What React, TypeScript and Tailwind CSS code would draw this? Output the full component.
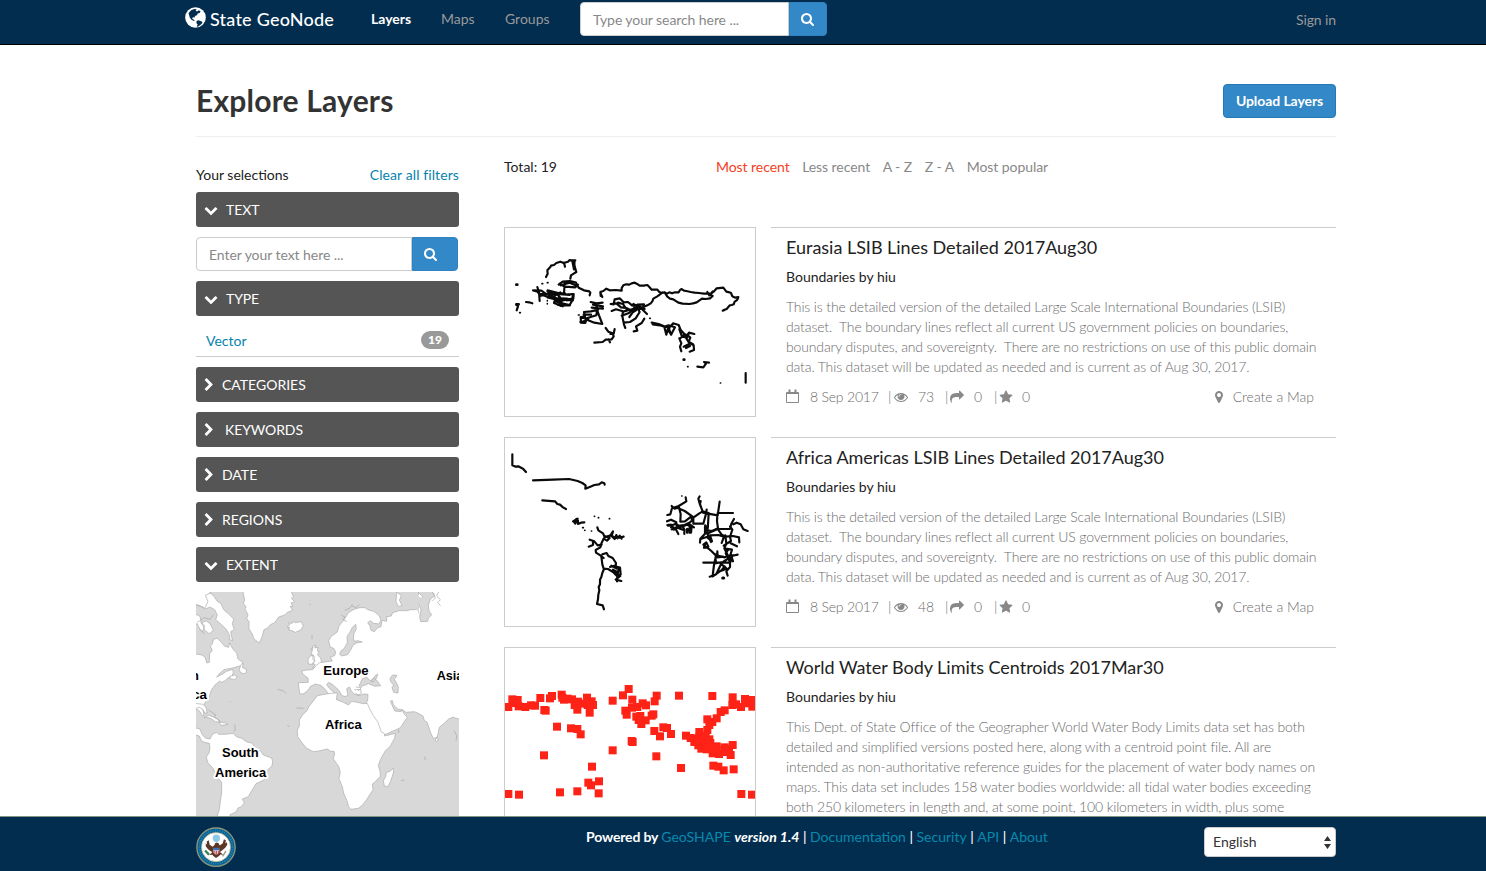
import React from "react";

const ICONS = {
  search:
    "M1152 832q0-185-131.5-316.5t-316.5-131.5-316.5 131.5-131.5 316.5 131.5 316.5 316.5 131.5 316.5-131.5 131.5-316.5zm512 832q0 52-38 90t-90 38q-54 0-90-38l-343-342q-179 124-399 124-143 0-273.5-55.5t-225-150-150-225-55.5-273.5 55.5-273.5 150-225 225-150 273.5-55.5 273.5 55.5 225 150 150 225 55.5 273.5q0 220-124 399l343 343q37 37 37 90z",
  down: "M1683 808l-742 741q-19 19-45 19t-45-19l-742-741q-19-19-19-45.5t19-45.5l166-165q19-19 45-19t45 19l531 531 531-531q19-19 45-19t45 19l166 165q19 19 19 45.5t-19 45.5z",
  right:
    "M1363 877l-742 742q-19 19-45 19t-45-19l-166-166q-19-19-19-45t19-45l531-531-531-531q-19-19-19-45t19-45l166-166q19-19 45-19t45 19l742 742q19 19 19 45t-19 45z",
  star: "M1728 647q0 22-26 48l-363 354 86 500q1 7 1 20 0 21-10.5 35.5t-30.5 14.5q-19 0-40-12l-449-236-449 236q-22 12-40 12-21 0-31.5-14.5t-10.5-35.5q0-6 2-20l86-500-364-354q-25-27-25-48 0-37 56-46l502-73 225-455q19-41 49-41t49 41l225 455 502 73q56 9 56 46z",
  eye: "M1664 960q-152-236-381-353 61 104 61 225 0 185-131.5 316.5t-316.5 131.5-316.5-131.5-131.5-316.5q0-121 61-225-229 117-381 353 133 205 333.5 326.5t434.5 121.5 434.5-121.5 333.5-326.5zm-720-384q0-20-14-34t-34-14q-125 0-214.5 89.5t-89.5 214.5q0 20 14 34t34 14 34-14 14-34q0-86 61-147t147-61q20 0 34-14t14-34zm848 384q0 34-20 69-140 230-376.5 368.5t-499.5 138.5-499.5-139-376.5-368q-20-35-20-69t20-69q140-229 376.5-368t499.5-139 499.5 139 376.5 368q20 35 20 69z",
  share:
    "M1792 640q0 26-19 45l-512 512q-19 19-45 19t-45-19-19-45v-256h-224q-98 0-175.5 6t-154 21.5-133 42.5-105.5 69.5-80 101-48.5 138.5-17.5 181q0 55 5 123 0 6 2.5 23.5t2.5 26.5q0 15-8.5 25t-23.5 10q-16 0-28-17-7-9-13-22t-13.5-30-10.5-24q-127-285-127-451 0-199 53-333 162-403 875-403h224v-256q0-26 19-45t45-19 45 19l512 512q19 19 19 45z",
  marker:
    "M1152 640q0-106-75-181t-181-75-181 75-75 181 75 181 181 75 181-75 75-181zm256 0q0 109-33 179l-364 774q-16 33-47.5 52t-67.5 19-67.5-19-46.5-52l-365-774q-33-70-33-179 0-212 150-362t362-150 362 150 150 362z",
};

function Icon({ name, className }: { name: keyof typeof ICONS; className: string }) {
  return (
    <svg viewBox="0 0 1792 1792" fill="currentColor" className={`shrink-0 ${className}`}>
      <path d={ICONS[name]} />
    </svg>
  );
}

function Globe() {
  return (
    <svg viewBox="27 20 63 64" className="h-[21px] w-[21px] shrink-0">
      <circle cx="58.5" cy="52" r="31.5" fill="#fff" />
      <path
        fill="#022d4f"
        d="M40 35l6-6 10-3 6 1-3 4 4 3 6-4 5 4-3 4-6 2-2 5-5 2-3 5-4-1-3 3 3 3 5 3-2 3-8-4-5-7-2-8-2-4zM62 63l5-3 7 3 6 3-3 6-6 4-5 4-4 0 3-6-4-6z"
      />
    </svg>
  );
}

function CalendarIcon() {
  return (
    <svg viewBox="0 0 13 14" className="h-[14px] w-[13px] shrink-0" fill="none" stroke="currentColor">
      <path d="M.5 3.500h12v10h-12zM.5 4.500h12" />
      <path d="M3.500 .5v3M9.500 .5v3" strokeWidth="2" />
    </svg>
  );
}

function Panel({ title, open, pad }: { title: string; open?: boolean; pad?: boolean }) {
  return (
    <div className="flex h-[35px] items-center rounded-[3px] bg-[#555] pl-2 text-[14px] text-white">
      <Icon name={open ? "down" : "right"} className={open ? "mr-2 h-[14px] w-[14px]" : "-ml-0.5 mr-1 h-[14px] w-[14px]"} />
      <span className={pad ? "pl-[5px] tracking-[-0.1px]" : open ? "tracking-[-0.1px]" : "pl-0.5"}>{title}</span>
    </div>
  );
}

function Eurasia() {
  return (
    <svg viewBox="15 18 750 564" className="block h-[188px] w-[250px]" fill="none" stroke="#0a0a0a" strokeWidth="6.500" strokeLinejoin="round" strokeLinecap="round">
      <path d="M138 165l5-10-1-10 9-10 2-4 9-2 7-6 12-4 10 4 13-4 5-5 9 2 6 1-1 10 2 10 4 13-8 5-8 5-2 10M192 122l3 12M217 118l5 24M210 115h16M176 188l12-9 22-2 18 5 8 15 16 8 16 3 3 4-2 8M178 186l18 8 30 2 8-8M182 190l27-8 21 9M99 205l12 3 7 8 20 7 24 3 20 7 18-3 19 5M112 195l5 15 2 27M104 205l20 1 14 10 25-6 30 8 28-2-1 14-20 5M120 222l23-6 22 17-3 10 26 10M143 205l23 6 15 16 2 25M117 216l53 0 39 3M142 226l42 10 33-6 2-14M165 239l25-10 26 8-7 12-23-5M175 218l7 24-8 7M194 180l-2 36M142 207l18 17 21-13M150 214h45M160 230h40M180 250h30M78 240l9 1 10 3M49 248l5 5-4 12" />
      <path d="M302 222l-1-12 9-3 9-7 10 5 18-1 18 2 0-8 5-8 9-3 9 1 7-4 9-2 6 3 9 6 12 0 11-2 6 6 7 8 17 0 6 7 8 3 8-2 7 4 7-4 8 3 9-3 11 0 4-7 4-3 8 5 7 1 13 3 12 2 13 1 15 2 22-1 7-5 9-10 20-2 9 12 9 2 5 2 4 10 9 4 9-2-2 6-3 4-6 4-3 8-6 2-6 1-9 11-9 3M488 211l-9 7-7 5-12 7-3 8-5 6-10 6-12 5-15 2-7 8-10 6-10 14M494 211l8 13 8 6 10 2 15 10 13 3 20 1 11-2 11-3 16-11 11 1 13-2 8-7-11-6M622 210l6 10 10-12M307 225l-6-13M668 266l8-3" />
      <path d="M332 246l9 1 3-15 15-3 12 12 13-1 12 10 22 4M333 246l16-2 14 12 16 2 18 9 17-9M354 242l15 4 9 14 18 7M335 267l13-5 21 6-2 14 5 26 4 10M372 268l27-7 13-13 20-1-4 16 13 13M371 302l19-2 17-11 12-19-8-15M365 281l22-8 17-13 30 1M400 246l20 12-25 4M401 328l11-2-4-13 17-10 8-13M397 251l22 1M402 259l19-3" />
      <path d="M272 240l18 4 18-2M279 248l30 5M286 247l8 16-21 5-21 2 3 14-13 1 1 17 13 1 4-14 29-9 2-13M275 257l34 3M292 266l5 14 10 26-24-4-26-10M251 278h22M246 287l19 3-16 9M317 318l8 11 13 5 3 9-6 9-18 1-9 7-25 2M344 321l-3 14-10 1M326 352l4 9" />
      <path d="M455 302l21 4 22 9 16-4 5-7 17 5 6 15 11 12 8 4 6-8 16 4M458 307l22 3 15 5 6-4M493 315l6 23 6-24 8 24 12-22-20-6M511 311l-6 15 9 12M538 322l6 17 14 6 10-12M538 350l13-8 9 7 4-8 7 6-5 12 14 8M538 349l6 15-4 10 4 14M558 348l11 17-18 9M569 363l12 7 1 14-13 5M548 344l13 3M558 378l12-6M592 434l18 2 8-11-6-5 15 2" />
      <path d="M737 453v29" />
      <path strokeWidth="8" d="M49 188h3M49 247h7M551 413h2M242 300h6M172 239h12M181 250h9M405 250l11 4" />
      <path strokeWidth="5" d="M126 185h2M142 182h2M142 236v1M142 245v1M59 272h2M235 279h3M449 289h2M563 434h1M661 483h1" />
    </svg>
  );
}

function AfricaAmericas() {
  return (
    <svg viewBox="15 18 750 564" className="block h-[188px] w-[250px]" fill="none" stroke="#0a0a0a" strokeWidth="6.500" strokeLinejoin="round" strokeLinecap="round">
      <path d="M37 67v33l10 4 8-1 14 7 9 10M99 145l60-2 48-2 26 6 14 6 10 7-1 10 15-6 12-5 14-2 8-6 8 3 1 4M127 205l38 3 7 8 8 2 9 8 9 5" />
      <path d="M219 268l14-8-7 15-5-7 8-7M234 266v10l9-4 10-1M292 286l3 9 14 9 5 11 17-4 8-13-4 13 10 7 14-1 12-3M315 313l14 5-8 8-10-6-6 12-4 14-14 8 1 8 13 8 10 8M331 309l13 12 5-12 4 10 6-8 6 9M269 323l14 5 10 12 12-2M279 330v9l-13 5M307 367l13-4 5 9 13 6 10 15-1 11 13 3 2 20-10 5-1 16M304 373l3 24 4 13 13 1 15 9 12 12M330 405l13-4 13 8-2 12-15-8 22 19-14 11 17 4M312 411l-5 12-3 12-4 8 0 14-4 8 2 10-3 13-1 14-3 14 17 4 4 12" />
      <path d="M334 401l16 9" />
      <path d="M502 249l9-2 5-18 20-7 23-14-2-12M515 222l9 8 13-4 5 20-1 23 14-1 19-15 2 13-17 13-20 2-18 9-8-12M533 228l21 9 27 19 17-12 10-6-8-20-5-18 4-7M602 207l-2 9 9 26 44 8 6-41M580 255v20l30 0 8-30 2-12M608 238l18 5-2 36-4 15M653 243h46M652 248l-1 20 3 21-18 8-15-2-5-15" />
      <path d="M501 268l12-5 16 8M502 279l16 0 10-4 10 8-10 5-15-2M515 292l11-3 9 17M522 293l10-6 21 8 0 11M540 286l21-8 14 8-2 16-8-10M529 279l10 8 8-6 7 13M569 285v17M549 281l16-7 17 12M615 283v22l-14 15-1 12M624 281l-3 24 32-14 37 0 4-16 8-14M653 291l12 17 12 6 22-2 18 4 1 15M690 283l7 10-7 22 3 12-22 14M700 277l10-5 12 5 8 15 13 5M604 320l16-5 16 13-6-18 25-1 17 5-7 19M621 303l12 27M610 338l9-7 6 13-13 3 10 0 12 10 12 12 28 7 12-5 25-2M676 310l3 25-6 14 9 18M676 350l20 3-4 13 7 22M692 334l19 9M610 392l80 0 0 13-11 13 4 13M650 365l-8 34-4 32-9 3M665 392l-16 34-11 7 26-18 10-12M648 369l-4 25 25-4 24-16-1 15M685 352l-8 12 12 24M652 358l1 18 16-2M662 395l18 15-16 6M695 372l18-4" />
      <path strokeWidth="9" d="M668 438h3M694 373v9M505 280h6M614 339v5M646 385v4M562 292v9" />
      <path strokeWidth="5" d="M283 253h1M295 257h1M328 260h1M248 287h2M254 295h1M274 297h1M545 192h1" />
    </svg>
  );
}

const CENTROIDS = [
  [25, 195], [37, 172], [53, 174], [45, 183], [56, 193], [76, 195], [93, 190], [105, 191], [121, 168], [137, 206], [133, 204], [150, 169], [156, 162], [185, 158],
  [187, 167], [192, 173], [203, 170], [216, 172], [224, 189], [234, 179], [232, 203], [249, 185], [261, 167], [263, 189], [275, 178], [279, 189], [269, 212],
  [338, 176], [386, 141], [369, 160], [397, 173], [470, 161], [464, 178], [537, 161], [637, 162], [428, 184], [438, 190], [412, 195], [396, 197], [376, 206], [380, 218],
  [409, 224], [421, 222], [416, 234], [437, 235], [424, 246], [455, 221], [460, 217], [171, 254], [213, 259], [232, 261], [242, 277], [463, 267], [480, 283],
  [490, 256], [501, 258], [513, 276], [395, 297], [398, 300], [338, 325], [469, 343], [132, 340], [276, 374], [265, 422], [273, 430], [297, 418], [296, 454],
  [25, 456], [57, 458], [180, 451], [232, 448], [543, 378], [558, 281], [572, 288], [585, 291], [598, 270], [622, 264], [628, 249], [622, 232], [637, 240],
  [650, 229], [662, 210], [674, 205], [697, 189], [698, 166], [708, 187], [723, 195], [735, 171], [744, 184], [755, 174], [757, 194], [583, 300], [598, 285],
  [608, 290], [617, 281], [628, 292], [595, 310], [605, 305], [617, 306], [631, 303], [604, 320], [620, 322], [635, 316], [650, 313], [638, 334], [650, 323],
  [657, 336], [674, 316], [677, 330], [687, 321], [698, 309], [692, 339], [640, 371], [655, 374], [671, 385], [701, 382], [724, 456], [756, 458],
];

function WaterBodies() {
  return (
    <svg viewBox="15 18 750 564" className="block h-[188px] w-[250px]">
      {CENTROIDS.map(([x, y], i) => (
        <rect key={i} x={x - 12} y={y - 12} width="24" height="24" fill="#ff2216" />
      ))}
    </svg>
  );
}

function ExtentMap() {
  return (
    <svg viewBox="18 21 789 672" className="block h-[224px] w-[263px] shrink-0">
      <rect x="18" y="21" width="789" height="672" fill="#d8d8d8" />
      <g fill="#fff" stroke="#aaa" strokeWidth="2" strokeLinejoin="round">
        <path d="M159 10v11l5 24-4 10 8 10-3 8 9 16-4 11 7 10 0 22 10 15 5 15 16 12 9-21 5-19 11-5 8-10 13-6 12-17 18-6 8-8 16-6-8-12 9 0-6-10 11-4-10-10 6-6-6-13V10z" />
        <path d="M14 60l20 4 12 8 14-6 14 8 8 16-5 14 13 11 20 19 9 18 0 12 9 3-4-15-2-12 11-6-6-18 4-14-16-16-14-12-8-18-12-8-9-14-12-11V10H10z" />
        <path d="M14 86l16 8 4 22 10 6-6 18-8-6-8-18-8 2zM36 112l14-4 10 8 10 20-12 10-14-10z" />
        <path d="M14 206l22 4 10 8 4 16 8-2 1-26 8-10-6-12 7-9 2-12 12-3 10 10 12 14 12 3 3-14 8 16 13 16 4 17 14 10 0 8-26 8-30 6-12 10-10 12 16-8 14-9 18-6 2 10-6 13-11 3-7 8-12 5-5-4-14 12-11 15-6 21-13 17-7 18 4 20-4 2-9-14-7-6H14z" />
        <path d="M148 254l4-14 7-6-1 14 10 4 2 10-8 4-10-3zM119 274l14-4 10 6-10 8-12-3z" />
        <path d="M296 114l11 1 3-7 5 5 19-3 6 13-8 12-16 7-13-6-9-3 6-5-9-2 8-6zM354 222l8-10 10 1 2 14-5 11-14-1zM369 183l8-3-3 9 10-3-2 12 6 2-6 9 10 10 4 19-8 6-20 3 8-8-9-4 7-6-6-7 2-12-6-1z" />
        <path d="M427 228l-6-12 13-4 3-11-5-10-12-6-4-18 8-13 18-13 5-18 16-20 12-20 17-10 17-5 16 0 8 6 18 5 16 12 6 14-6 12-16-2-10-8-8 6 7 10 3 13 10 4 10-12 10-3 3-19 14 3 0-14 14-2 4-10 20-6 22 0 12-3 17 0 7-6-7-25 8-19V10h130v395l-28-8-12 4-17 16-12 10-6 29-12 5-9-20-10-30-8-4-4-14-16-9-10-4-25 2-10-7-14-2-14-14-3-12-6 1 13 30 19 2 2-8 8 16 9 9-10 14-11 17-17 8-38 17-9-5-9-25-15-20-10-22-14-8 6-11 8-17 1-17-12-1-12 4-17-3-9-10-6-12-8 5 4 20-9 4-10-4-9-16-9-8-11-10-11-5-5 8 11 13 12 10-4 9-14-6-12-16-11-9-16-4-14 7-10 14-13 9-10-1-4-33 30-1-1-13-16-12-3-9 15-3 18-1 9-11 12-10z" />
        <path fill="#d8d8d8" d="M497 118l-10 9-7 14-9 14 1 18-9 17-10 8-4 9 5 6 19-4 9-14 7-15 12-7 16-2-14-4-10 2-3-10 2-14 7-14zM507 303l10-22 13-4 11 10 12-8 9 9 10 14-17 2-20-8-20 8zM600 280l8-10 13 1-8 12 7 12 5 12-1 17-13-2-5-14 5-8-9-10zM543 289l12-16 8-6-3 12-11 12zM684 10v11l14 14-13 19 8 20-4 24 3 12 21-1 2-10 10-9-8-12-2-18 7-19 12-8-8-13V10z" />
        <path stroke="none" fill="#d8d8d8" d="M634 21h50v12l14 8-13 15 4 38-8-20-40-14-8 4 8-10-8-19 6-6z" />
        <path d="M620 21l14 11-6 14 8 15-10 4-8-14z" />
        <path d="M382 332l38-7 22-1-3 20 17 6 20 10 8-11 18 3 18 4 12-1 6 15 12 22 13 18 11 31 9 4 1 8 32-8-2 14-13 24-16 16-14 25-6 18 5 16 1 16-14 15-10 8 2 18-10 14-9 15-13 17-12 9-22 3-7-8-5-18-10-22-4-20-10-24 4-19-5-18-6-8-10-15 4-14-2-8-10 0-10-7-26 6-16 2-20-10-15-18-12-17-1-20 6-12 0-18 10-16 13-12 5-11zM609 549l2 12-10 30-8 14-10-2-3-16 7-12 2-13 12-3z" />
        <path d="M14 355l26 3 8 10 4 16-7 0-7-11-10-6-14 5zM14 428l16 4 6 16 10 11 14 3 7-14 13-6 6 6 20 0 24-3 9 10 16 5 14 10 18 5 9 15 16 8 8 12 25 9 3 10-2 14-14 12-4 22-8 9-22 10-9 15-8 13-6 11-18 7 6 12-10 12-9 3-6 12-18 8 1 9H80l8-24 3-24 4-26 0-32-14-16-12-26-16-18-4-16 8-12 3-15-2-14-14-3-10-5-6-14-14-4z" />
        <path d="M42 398l13-7 14 4 13 7 10 9-16-1-11-8-12-5zM86 411l18 2 10 5-20 3zM736 466l5-10 4 9-6 4z" />
      </g>
      <g fill="none" stroke="#a6a6a6" strokeWidth="2">
        <path d="M18 57l26 13 10-20-8-19 18-8M22 112l20-14 18 5 10-14M28 130l15 17M454 91l11 5-6 8 12 6M464 76l15-6 9-13M486 63l12 5 10-9M493 314h20v12l-10 5-7-8M497 306l17 2-10 10M56 375l22 15-6 5 18 14M134 418l2 15-4 6M366 150v13M361 194l8-8M359 60l4-3M263 313l17 4 8 8M292 420l6 6M119 349l3 1M319 369l22 1M626 434v10M704 515l2 10M633 587l10-2M746 21l-6 12 11 11-8 9 9 10M730 23l6 16-9 9M792 437l8 14-2 16" />
      </g>
      <g fontFamily="Liberation Sans, Arial, sans-serif" fontWeight="700" fontSize="40" textAnchor="middle" fill="#000" stroke="#fff" strokeWidth="12" strokeLinejoin="round" paintOrder="stroke">
        <text x="468" y="270" textLength="136" lengthAdjust="spacingAndGlyphs">Europe</text>
        <text x="460" y="431" textLength="110" lengthAdjust="spacingAndGlyphs">Africa</text>
        <text x="151" y="517" textLength="110" lengthAdjust="spacingAndGlyphs">South</text>
        <text x="152" y="575" textLength="154" lengthAdjust="spacingAndGlyphs">America</text>
        <text x="740" y="286" textAnchor="start" textLength="80" lengthAdjust="spacingAndGlyphs">Asia</text>
        <text x="27" y="286" textAnchor="end">n</text>
        <text x="51" y="342" textAnchor="end">ca</text>
      </g>
    </svg>
  );
}

function Seal() {
  return (
    <svg viewBox="18 725 120 121" className="h-10 w-10 shrink-0">
      <circle cx="78" cy="786" r="58" fill="#07639a" stroke="#8a9878" strokeWidth="4" />
      <circle cx="78" cy="786" r="50" fill="none" stroke="#2f86a0" strokeWidth="5" strokeDasharray="3 4" />
      <circle cx="78" cy="786" r="44" fill="#fff" stroke="#b8ad78" strokeWidth="2" />
      <circle cx="79" cy="759" r="11" fill="#8bc8ea" />
      <path fill="#5c3726" d="M74 779l-6 6-9-6-3-14-6 4 1 9-4-4 0 9 7 9 8 6 5 3-9 9 9-1 3 4 8 6 9-6 4-5 9 1-10-8 6-5 10-8 6-9-1-8-5 3 2-9-6-3-4 13-9 6-3-7-6-2-5 2z" />
      <path fill="#d9d8e5" d="M70 790h18v12l-9 8-9-8z" />
      <path fill="#d64654" d="M71 797h3v9l-3-3zM77 797h4v12h-4zM84 797h3v6l-3 3z" />
      <path fill="#3774b5" d="M70 788h18v7H70z" />
      <path fill="none" stroke="#348454" strokeWidth="7" d="M45 796l12 13" />
      <path fill="none" stroke="#98937a" strokeWidth="4" d="M98 814l10-16" />
    </svg>
  );
}

const LSIB = [
  "This is the detailed version of the detailed Large Scale International Boundaries (LSIB)",
  "dataset.  The boundary lines reflect all current US government policies on boundaries,",
  "boundary disputes, and sovereignty.  There are no restrictions on use of this public domain",
  "data. This dataset will be updated as needed and is current as of Aug 30, 2017.",
];
const WATER = [
  "This Dept. of State Office of the Geographer World Water Body Limits data set has both",
  "detailed and simplified versions posted here, along with a centroid point file. All are",
  "intended as non-authoritative reference guides for the placement of water body names on",
  "maps. This data set includes 158 water bodies worldwide: all tidal water bodies exceeding",
  "both 250 kilometers in length and, at some point, 100 kilometers in width, plus some",
];

const LAYERS = [
  { title: "Eurasia LSIB Lines Detailed 2017Aug30", lines: LSIB, views: 73, Thumb: Eurasia },
  { title: "Africa Americas LSIB Lines Detailed 2017Aug30", lines: LSIB, views: 48, Thumb: AfricaAmericas },
  { title: "World Water Body Limits Centroids 2017Mar30", lines: WATER, views: 0, Thumb: WaterBodies },
];

function LayerRow({ title, lines, views, Thumb }: (typeof LAYERS)[number]) {
  return (
    <article className="mb-5 flex h-[190px] shrink-0 items-start">
      <div className="mr-[15px] h-[190px] w-[252px] shrink-0 border border-[#ccc]">
        <Thumb />
      </div>
      <div className="flex-1 border-t border-[#ccc] pl-[15px] pt-2">
        <h4 className="text-[18px] leading-[22px] tracking-[-0.02px] text-[#222]">{title}</h4>
        <p className="mt-[9px] leading-5 text-[#222]">Boundaries by hiu</p>
        <div className="mt-2.5 whitespace-pre font-light leading-5 tracking-[-0.145px] text-[#6c6c6c]">
          {lines.map((l) => (
            <p key={l}>{l}</p>
          ))}
        </div>
        {views > 0 && (
          <div className="mt-2.5 flex h-5 items-center pr-[22px] font-light text-[#6c6c6c]">
            <span className="-mt-0.5 text-[#888]"><CalendarIcon /></span>
            <span className="ml-[11px] w-[78px] tracking-[-0.2px]">8 Sep 2017</span>
            <span className="w-[6px]">|</span>
            <Icon name="eye" className="h-[14px] w-[14px] text-[#888]" />
            <span className="ml-2.5 w-[27px]">{views}</span>
            <span className="w-[5px]">|</span>
            <Icon name="share" className="h-[14px] w-[14px] text-[#888]" />
            <span className="ml-2.5 w-[20px]">0</span>
            <span className="w-[5px]">|</span>
            <Icon name="star" className="h-[14px] w-[14px] text-[#888]" />
            <span className="ml-[9px]">0</span>
            <Icon name="marker" className="ml-auto mr-[7px] h-[14px] w-[14px] text-[#888]" />
            <span>Create a Map</span>
          </div>
        )}
      </div>
    </article>
  );
}

export default function App() {
  return (
    <div className="flex h-[871px] w-[1486px] flex-col overflow-hidden bg-white font-['Lato',sans-serif] text-[14px] leading-5 text-[#222]">
      <header className="flex h-[45px] shrink-0 items-start border-b border-black bg-[#022d4f] pl-[185px] pr-[150px] text-[#999]">
        <div className="flex h-[38px] w-[186px] items-center gap-1 text-[18px] font-medium tracking-[0.22px] text-white">
          <span className="-mt-1"><Globe /></span>
          <span>State GeoNode</span>
        </div>
        <nav className="flex h-[38px] w-[209px] items-center">
          <a className="w-[70px] font-bold text-white">Layers</a>
          <a className="w-[64px]">Maps</a>
          <a>Groups</a>
        </nav>
        <div className="mt-0.5 flex h-[34px] w-[247px]">
          <div className="flex flex-1 items-center rounded-l-[4px] border border-[#ccc] bg-white pl-3 pt-0.5 tracking-[-0.08px] text-[#888]">Type your search here ...</div>
          <div className="flex w-[38px] items-center justify-center rounded-r-[4px] border border-[#2e82c1] bg-[#3388c8] text-white">
            <Icon name="search" className="h-[14px] w-[14px]" />
          </div>
        </div>
        <a className="ml-auto mt-2.5 tracking-[-0.1px]">Sign in</a>
      </header>

      <main className="flex h-[771px] shrink-0 flex-col overflow-hidden pl-[196px] pr-[150px]">
        <div className="flex h-[92px] shrink-0 items-start justify-between border-b border-[#eee] pt-[39px]">
          <h2 className="-mt-px text-[30px] font-bold leading-[34px] tracking-[0.2px] text-[#333]">Explore Layers</h2>
          <button className="h-[34px] w-[113px] rounded-[4px] border border-[#2478b5] bg-[#3388c8] text-[14px] font-bold tracking-[-0.08px] text-white">Upload Layers</button>
        </div>
        <div className="flex min-h-0 flex-1">
          <aside className="mr-[45px] flex w-[263px] shrink-0 flex-col pt-7">
            <div className="mb-[7px] flex h-5 justify-between">
              <span>Your selections</span>
              <a className="tracking-[0.1px] text-[#0783ad]">Clear all filters</a>
            </div>
            <Panel title="TEXT" open />
            <div className="my-2.5 flex h-[34px] w-[262px] shrink-0">
              <div className="flex flex-1 items-center rounded-l-[4px] border border-[#ccc] pl-3 pt-0.5 tracking-[-0.06px] text-[#888]">Enter your text here ...</div>
              <div className="flex w-[46px] items-center rounded-r-[4px] border border-[#2e82c1] bg-[#3388c8] pl-[11px] text-white">
                <Icon name="search" className="h-[14px] w-[14px]" />
              </div>
            </div>
            <Panel title="TYPE" open />
            <div className="mb-2.5 flex h-[41px] shrink-0 items-center justify-between border-b border-[#ccc] px-2.5 pt-2">
              <a className="mt-0.5 text-[#0783ad]">Vector</a>
              <span className="flex h-[18px] w-7 items-center justify-center rounded-[10px] bg-[#999] text-[12px] font-black text-white">19</span>
            </div>
            <div className="flex flex-col gap-2.5">
              <Panel title="CATEGORIES" />
              <Panel title="KEYWORDS" pad />
              <Panel title="DATE" />
              <Panel title="REGIONS" />
              <Panel title="EXTENT" open />
              <ExtentMap />
            </div>
          </aside>
          <section className="flex flex-1 flex-col pt-5">
            <div className="mb-[50px] flex h-5 shrink-0">
              <span className="w-[212px]">Total: 19</span>
              <div className="flex gap-[12.5px] tracking-[-0.06px] text-[#888]">
                <a className="text-[#f43d23]">Most recent</a>
                <a>Less recent</a>
                <a>A - Z</a>
                <a>Z - A</a>
                <a>Most popular</a>
              </div>
            </div>
            {LAYERS.map((l) => (
              <LayerRow key={l.title} {...l} />
            ))}
          </section>
        </div>
      </main>

      <footer className="flex h-[55px] shrink-0 items-start border-t border-[#809486] bg-[#022d4f] pl-[196px] pr-[150px] pt-2.5 text-white">
        <div className="w-[390px]"><Seal /></div>
        <p className="whitespace-pre font-medium">
          <b className="tracking-[-0.15px]">Powered by </b><a className="font-normal text-[#078aad]">GeoSHAPE</a> <b className="italic">version 1.4</b> | <a className="font-normal text-[#078aad]">Documentation</a> | <a className="font-normal text-[#078aad]">Security</a> | <a className="font-normal text-[#078aad]">API</a> | <a className="font-normal text-[#078aad]">About</a>
        </p>
        <div className="ml-auto flex h-[30px] w-[132px] items-center justify-between rounded-[4px] border border-[#ccc] bg-white pl-2 pr-1 text-[#333]">
          <span>English</span>
          <svg viewBox="0 0 7 13" className="h-[13px] w-[7px]" fill="#333">
            <path d="M3.500 0L7 5H0zM3.500 13L0 8h7z" />
          </svg>
        </div>
      </footer>
    </div>
  );
}
